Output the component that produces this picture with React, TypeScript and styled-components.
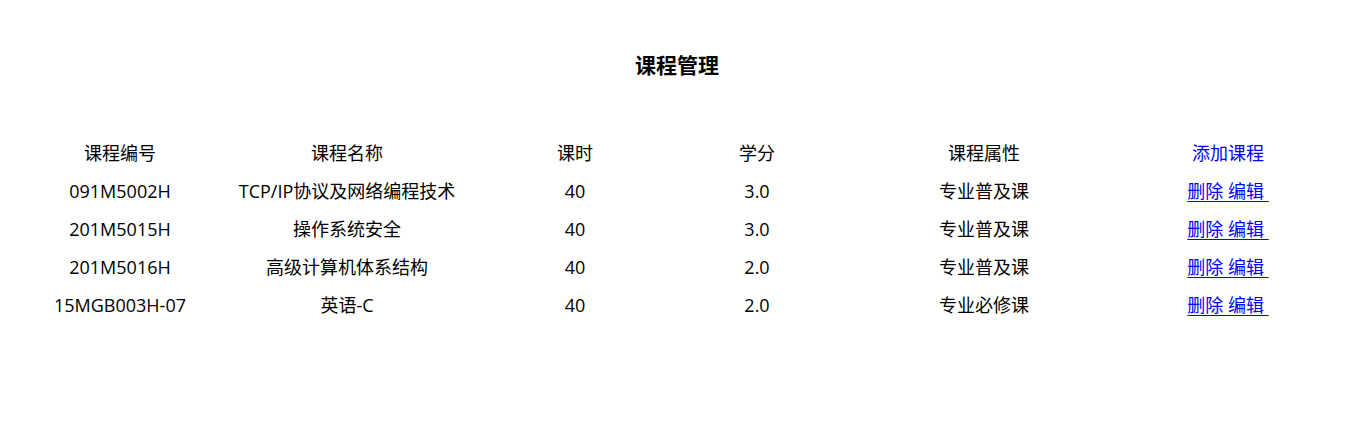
import React from "react";
import styled, { createGlobalStyle } from "styled-components";

const Global = createGlobalStyle`
  html, body { margin: 0; padding: 0; background: #fff; }
  body { font-family: "Open Sans", "Noto Sans CJK SC", sans-serif; color: #000; }
`;

const Page = styled.div`
  display: flex;
  flex-direction: column;
  align-items: center;
  padding-top: 48px;
`;

const Title = styled.h3`
  margin: 0;
  height: 32px;
  line-height: 32px;
  font-size: 21px;
  font-weight: 700;
  text-align: center;
  font-family: "Noto Sans CJK SC", sans-serif;
`;

const Table = styled.table`
  margin-top: 54px;
  width: 1306px;
  border-collapse: collapse;
  table-layout: fixed;
  font-size: 18px;
`;

const Cell = styled.td`
  height: 38px;
  padding: 0;
  text-align: center;
  vertical-align: middle;
  line-height: 38px;
  white-space: nowrap;
`;

const HeadCell = styled.th`
  height: 38px;
  padding: 0;
  font-weight: 400;
  text-align: center;
  vertical-align: middle;
  line-height: 38px;
`;

const AddLink = styled.a`
  color: #0000ff;
  text-decoration: none;
`;

const ActionLink = styled.a`
  color: #0000ff;
  text-decoration: underline;
  text-underline-offset: 3px;
  white-space: pre;
`;

const widths = [192, 262, 194, 170, 284, 204];

const rows = [
  ["091M5002H", "TCP/IP协议及网络编程技术", "40", "3.0", "专业普及课"],
  ["201M5015H", "操作系统安全", "40", "3.0", "专业普及课"],
  ["201M5016H", "高级计算机体系结构", "40", "2.0", "专业普及课"],
  ["15MGB003H-07", "英语-C", "40", "2.0", "专业必修课"],
];

export default function App() {
  return (
    <>
      <Global />
      <Page>
        <Title>课程管理</Title>
        <Table>
          <colgroup>
            {widths.map((w, i) => (
              <col key={i} style={{ width: w }} />
            ))}
          </colgroup>
          <thead>
            <tr>
              <HeadCell>课程编号</HeadCell>
              <HeadCell>课程名称</HeadCell>
              <HeadCell>课时</HeadCell>
              <HeadCell>学分</HeadCell>
              <HeadCell>课程属性</HeadCell>
              <HeadCell>
                <AddLink href="#">添加课程</AddLink>
              </HeadCell>
            </tr>
          </thead>
          <tbody>
            {rows.map((r) => (
              <tr key={r[0]}>
                {r.map((v, i) => (
                  <Cell key={i}>{v}</Cell>
                ))}
                <Cell>
                  <ActionLink href="#">{"删除 编辑 "}</ActionLink>
                </Cell>
              </tr>
            ))}
          </tbody>
        </Table>
      </Page>
    </>
  );
}
